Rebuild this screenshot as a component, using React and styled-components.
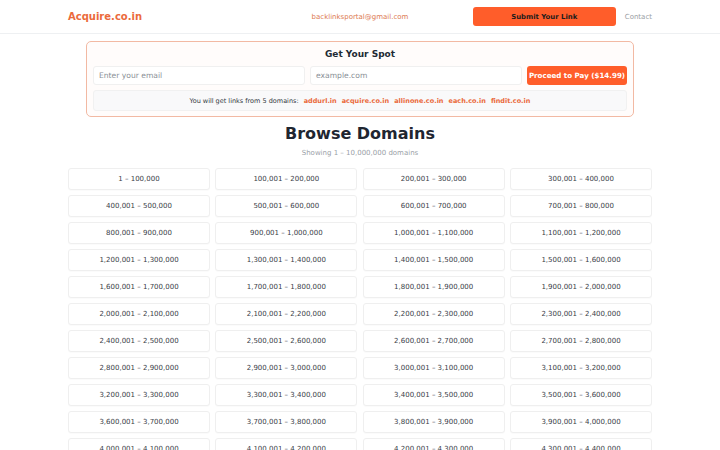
import React from "react";
import styled, { createGlobalStyle } from "styled-components";

const Global = createGlobalStyle`
  html, body { margin: 0; padding: 0; background: #ffffff; }
  body { font-family: "DejaVu Sans", "Noto Sans", sans-serif; color: #222; }
  * { box-sizing: border-box; }
`;

const Header = styled.header`
  height: 34px;
  border-bottom: 1px solid #eef0f2;
  display: flex;
  justify-content: center;
`;

const HeaderInner = styled.div`
  width: 584px;
  display: grid;
  grid-template-columns: 1fr auto 1fr;
  align-items: center;
`;

const Logo = styled.div`
  font-size: 10px;
  font-weight: 700;
  color: #eb6a3c;
`;

const Email = styled.div`
  font-size: 7px;
  color: #dd7a52;
`;

const RightGroup = styled.div`
  display: flex;
  justify-content: flex-end;
  align-items: center;
  gap: 9px;
`;

const SubmitButton = styled.button`
  width: 143px;
  height: 19px;
  border: none;
  border-radius: 3px;
  background: #ff5d2a;
  color: #1c1c1c;
  font-family: inherit;
  font-size: 6.9px;
  font-weight: 700;
  padding: 0;
`;

const NavLink = styled.div`
  font-size: 7px;
  color: #9a9ea4;
`;

const Main = styled.main`
  width: 584px;
  margin: 0 auto;
  padding-top: 7px;
  display: flex;
  flex-direction: column;
  align-items: center;
`;

const Card = styled.section`
  width: 548px;
  border: 1px solid #f2b9a3;
  border-radius: 5px;
  background: #fffcfb;
  padding: 6px 6px 5px;
  display: flex;
  flex-direction: column;
  gap: 5px;
`;

const CardTitle = styled.h2`
  margin: 0;
  height: 13px;
  line-height: 12px;
  text-align: center;
  font-size: 9px;
  font-weight: 700;
  color: #222a33;
`;

const FormRow = styled.div`
  display: grid;
  grid-template-columns: 1fr 1fr 100px;
  gap: 5px;
`;

const Input = styled.div`
  height: 19px;
  border: 1px solid #f0f0f0;
  border-radius: 3px;
  background: #fff;
  font-size: 7.6px;
  color: #8a8f96;
  display: flex;
  align-items: center;
  padding-left: 5px;
`;

const PayButton = styled.button`
  height: 19px;
  border: none;
  border-radius: 3px;
  background: #ff5d2a;
  color: #fff;
  font-family: inherit;
  font-size: 7.1px;
  font-weight: 700;
  padding: 0;
`;

const InfoBox = styled.div`
  height: 21px;
  border: 1px solid #f1f1f1;
  border-radius: 3px;
  background: #f9f9fa;
  display: flex;
  align-items: center;
  justify-content: center;
  gap: 5px;
  font-size: 6.5px;
  color: #333a42;
`;

const DomainTag = styled.span`
  font-weight: 700;
  color: #ea6a3c;
`;

const Title = styled.h1`
  margin: 7px 0 0;
  font-size: 16px;
  line-height: 20px;
  font-weight: 700;
  color: #1f2631;
`;

const Sub = styled.div`
  margin-top: 5px;
  font-size: 7px;
  line-height: 9px;
  color: #9aa0a7;
`;

const Grid = styled.div`
  margin-top: 10px;
  width: 100%;
  display: grid;
  grid-template-columns: repeat(4, 1fr);
  column-gap: 5.33px;
  row-gap: 5px;
`;

const Cell = styled.div`
  height: 22px;
  border: 1px solid #efefef;
  border-radius: 3px;
  background: #fff;
  box-shadow: 0 1px 1px rgba(0, 0, 0, 0.02);
  display: flex;
  align-items: center;
  justify-content: center;
  font-size: 7px;
  color: #3a4048;
`;

const fmt = (n) => n.toLocaleString("en-US");

const ranges = Array.from({ length: 100 }, (_, i) => {
  const start = i === 0 ? 1 : i * 100000 + 1;
  const end = (i + 1) * 100000;
  return `${fmt(start)} – ${fmt(end)}`;
});

const domains = ["addurl.in", "acquire.co.in", "allinone.co.in", "each.co.in", "findit.co.in"];

export default function App() {
  return (
    <>
      <Global />
      <Header>
        <HeaderInner>
          <Logo>Acquire.co.in</Logo>
          <Email>backlinksportal@gmail.com</Email>
          <RightGroup>
            <SubmitButton>Submit Your Link</SubmitButton>
            <NavLink>Contact</NavLink>
          </RightGroup>
        </HeaderInner>
      </Header>
      <Main>
        <Card>
          <CardTitle>Get Your Spot</CardTitle>
          <FormRow>
            <Input>Enter your email</Input>
            <Input>example.com</Input>
            <PayButton>Proceed to Pay ($14.99)</PayButton>
          </FormRow>
          <InfoBox>
            <span>You will get links from 5 domains:</span>
            {domains.map((d) => (
              <DomainTag key={d}>{d}</DomainTag>
            ))}
          </InfoBox>
        </Card>
        <Title>Browse Domains</Title>
        <Sub>Showing 1 – 10,000,000 domains</Sub>
        <Grid>
          {ranges.map((r) => (
            <Cell key={r}>{r}</Cell>
          ))}
        </Grid>
      </Main>
    </>
  );
}
